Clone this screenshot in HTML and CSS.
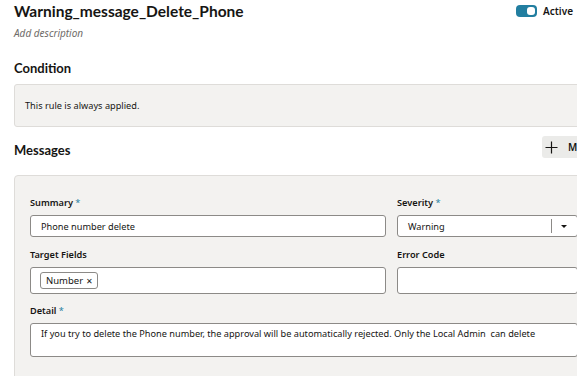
FILE: index.html
```html
<!DOCTYPE html>
<html>
<head>
<meta charset="utf-8">
<link rel="stylesheet" href="styles.css">
</head>
<body>
<div class="page">
  <header class="header">
    <div class="title-block">
      <h1 class="title">Warning_message_Delete_Phone</h1>
      <div class="desc">Add description</div>
    </div>
    <div class="active">
      <span class="toggle"><span class="knob"></span></span>
      <span class="active-label">Active</span>
    </div>
  </header>

  <h2 class="section-title cond-title">Condition</h2>
  <div class="cond-box">This rule is always applied.</div>

  <div class="msg-head">
    <h2 class="section-title">Messages</h2>
    <button class="add-btn"><svg class="plus" width="13" height="13" viewBox="0 0 13 13"><path d="M6.5 0.5v12M0.5 6.5h12" stroke="#161513" stroke-width="1.2" fill="none"/></svg><span>Message</span></button>
  </div>

  <div class="msg-panel">
    <div class="grid">
      <div class="field">
        <label class="label">Summary <span class="req">*</span></label>
        <div class="input">Phone number delete</div>
      </div>
      <div class="field">
        <label class="label">Severity <span class="req">*</span></label>
        <div class="input select">
          <span class="sel-text">Warning</span>
          <span class="sel-btn"><span class="caret"></span></span>
        </div>
      </div>
      <div class="field row2">
        <label class="label">Target Fields</label>
        <div class="input chips"><span class="chip">Number <span class="x">✕</span></span></div>
      </div>
      <div class="field row2">
        <label class="label">Error Code</label>
        <div class="input chips"></div>
      </div>
      <div class="field wide">
        <label class="label">Detail <span class="req">*</span></label>
        <div class="input textarea">If you try to delete the Phone number, the approval will be automatically rejected. Only the Local Admin&nbsp; can delete</div>
      </div>
    </div>
  </div>
</div>
</body>
</html>
```

FILE: styles.css
```css
* { box-sizing: border-box; }
html, body { margin: 0; padding: 0; }
body {
  background: #fff;
  font-family: "Noto Sans", "Open Sans", sans-serif;
  color: #161513;
  overflow: hidden;
  width: 577px;
  height: 376px;
}
.page {
  padding: 0 0 0 14px;
  width: 640px;
}
.header {
  display: flex;
  justify-content: space-between;
  align-items: flex-start;
  width: 563px;
  height: 59px;
}
.title {
  margin: 0;
  font-family: Lato, "Noto Sans", sans-serif;
  font-size: 15.5px;
  line-height: 22px;
  font-weight: 700;
}
.desc {
  margin-top: 4px;
  font-size: 10px;
  font-style: italic;
  color: #6f6c69;
  line-height: 14px;
}
.active {
  display: flex;
  align-items: center;
  gap: 6px;
  padding-top: 4px;
  padding-right: 4px;
}
.toggle {
  display: flex;
  justify-content: flex-end;
  align-items: center;
  width: 21px;
  height: 12px;
  border-radius: 4px;
  background: #227ea0;
  padding: 2px;
}
.knob {
  width: 8px;
  height: 8px;
  border-radius: 3px;
  background: #fff;
}
.active-label {
  font-size: 10px;
  font-weight: 600;
  line-height: 14px;
}
.section-title {
  margin: 0;
  font-family: Lato, "Noto Sans", sans-serif;
  font-size: 13px;
  font-weight: 700;
  line-height: 18px;
}
.cond-title {
  margin-bottom: 7px;
}
.cond-box {
  width: 582px;
  height: 43px;
  background: #f3f2f0;
  border: 1px solid #dedcd9;
  border-radius: 3px;
  padding: 0 10px;
  display: flex;
  align-items: center;
  font-size: 9.2px;
  color: #161513;
}
.msg-head {
  display: grid;
  grid-template-columns: 528px auto;
  align-items: center;
  margin-top: 8px;
  height: 22px;
}
.msg-head .section-title { padding-top: 6px; }
.add-btn {
  justify-self: start;
  height: 22px;
  border: none;
  border-radius: 3px;
  background: #ebebe9;
  font-family: inherit;
  font-size: 10px;
  font-weight: 600;
  color: #161513;
  padding: 0 8px 0 3px;
  display: flex;
  align-items: center;
  gap: 10px;
  white-space: nowrap;
}
.plus { display: block; }
.msg-panel {
  margin-top: 18px;
  width: 582px;
  height: 220px;
  background: #f3f2f0;
  border: 1px solid #dedcd9;
  border-radius: 4px;
  padding: 20px 15px;
}
.grid {
  display: grid;
  grid-template-columns: 356px 181px;
  column-gap: 11px;
}
.row2 { margin-top: 11px; }
.wide { grid-column: 1 / span 2; margin-top: 10px; }
.label {
  display: block;
  font-size: 9.2px;
  font-weight: 600;
  line-height: 14px;
  margin-bottom: 5px;
  color: #161513;
}
.req { color: #227ea0; font-weight: 400; }
.input {
  height: 22px;
  background: #fff;
  border: 1px solid #8c8a87;
  border-radius: 3px;
  font-size: 9.2px;
  display: flex;
  align-items: center;
  padding: 0 10px;
}
.select { padding-right: 0; }
.sel-text { flex: 1; }
.sel-btn {
  width: 26px;
  height: 100%;
  display: flex;
  align-items: center;
}
.sel-btn::before {
  content: "";
  width: 1px;
  height: 14px;
  background: #8c8a87;
}
.caret {
  margin-left: 9px;
  width: 0; height: 0;
  border-left: 3px solid transparent;
  border-right: 3px solid transparent;
  border-top: 3px solid #161513;
}
.chips {
  height: 27px;
  padding: 0 9px;
}
.chip {
  height: 17px;
  border: 1px solid #8c8a87;
  border-radius: 3px;
  padding: 0 4px 0 5px;
  display: flex;
  align-items: center;
  gap: 3px;
  font-size: 9.5px;
}
.x { font-size: 8px; }
.textarea {
  height: 34px;
  align-items: flex-start;
  padding-top: 3px;
}
```
